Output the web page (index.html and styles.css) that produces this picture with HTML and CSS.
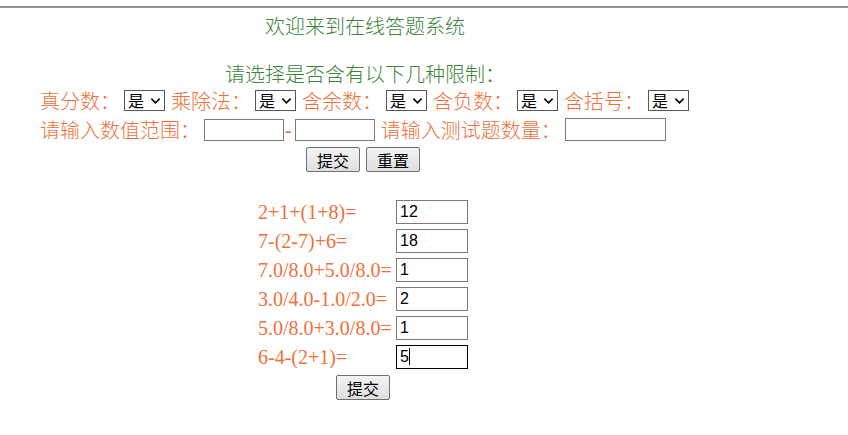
FILE: index.html
```html
<!DOCTYPE html>
<html lang="zh-CN">
<head>
<meta charset="utf-8">
<title>在线答题系统</title>
<link rel="stylesheet" href="styles.css">
</head>
<body>
<div class="topline"></div>
<h1 class="title">欢迎来到在线答题系统</h1>
<p class="prompt">请选择是否含有以下几种限制：</p>
<div class="row row-opts">
  <span class="label">真分数：</span>
  <span class="sel">是<svg viewBox="0 0 12 8" width="11" height="8"><path d="M1.5 1.5 L6 6 L10.5 1.5" fill="none" stroke="#000" stroke-width="1.8"/></svg></span>
  <span class="label">乘除法：</span>
  <span class="sel">是<svg viewBox="0 0 12 8" width="11" height="8"><path d="M1.5 1.5 L6 6 L10.5 1.5" fill="none" stroke="#000" stroke-width="1.8"/></svg></span>
  <span class="label">含余数：</span>
  <span class="sel">是<svg viewBox="0 0 12 8" width="11" height="8"><path d="M1.5 1.5 L6 6 L10.5 1.5" fill="none" stroke="#000" stroke-width="1.8"/></svg></span>
  <span class="label">含负数：</span>
  <span class="sel">是<svg viewBox="0 0 12 8" width="11" height="8"><path d="M1.5 1.5 L6 6 L10.5 1.5" fill="none" stroke="#000" stroke-width="1.8"/></svg></span>
  <span class="label">含括号：</span>
  <span class="sel">是<svg viewBox="0 0 12 8" width="11" height="8"><path d="M1.5 1.5 L6 6 L10.5 1.5" fill="none" stroke="#000" stroke-width="1.8"/></svg></span>
</div>
<div class="row row-range">
  <span class="label">请输入数值范围：</span>
  <input class="box box-range" type="text">
  <span class="dash">-</span>
  <input class="box box-range" type="text">
  <span class="label label-count">请输入测试题数量：</span>
  <input class="box box-count" type="text">
</div>
<div class="row row-btns">
  <button class="btn" type="button">提交</button>
  <button class="btn" type="button">重置</button>
</div>
<div class="questions">
  <div class="q"><span class="expr">2+1+(1+8)=</span><input class="box box-ans" type="text" value="12"></div>
  <div class="q"><span class="expr">7-(2-7)+6=</span><input class="box box-ans" type="text" value="18"></div>
  <div class="q"><span class="expr">7.0/8.0+5.0/8.0=</span><input class="box box-ans" type="text" value="1"></div>
  <div class="q"><span class="expr">3.0/4.0-1.0/2.0=</span><input class="box box-ans" type="text" value="2"></div>
  <div class="q"><span class="expr">5.0/8.0+3.0/8.0=</span><input class="box box-ans" type="text" value="1"></div>
  <div class="q"><span class="expr">6-4-(2+1)=</span><span class="box box-ans focused">5<span class="caret"></span></span></div>
</div>
<div class="row row-submit">
  <button class="btn" type="button">提交</button>
</div>
</body>
</html>
```

FILE: styles.css
```css
html, body {
  margin: 0;
  padding: 0;
  background: #ffffff;
}
body {
  font-family: "Liberation Serif", "Noto Sans CJK SC", serif;
  font-size: 20px;
}
.topline {
  margin-top: 6px;
  height: 2px;
  background: #8f8fa6;
}
.title {
  margin: 6px 0 0 0;
  padding-left: 265px;
  font-size: 20px;
  line-height: 24px;
  height: 24px;
  color: #3a853a;
  font-family: "Noto Sans CJK SC", sans-serif;
  font-weight: 300;
}
.prompt {
  margin: 24px 0 0 0;
  padding-left: 225px;
  line-height: 24px;
  height: 24px;
  color: #3a853a;
  font-family: "Noto Sans CJK SC", sans-serif;
  font-weight: 300;
}
.row {
  display: flex;
  align-items: center;
}
.row-opts {
  height: 29px;
  padding-left: 40px;
}
.row-range {
  height: 29px;
  padding-left: 40px;
}
.label {
  color: #f0703c;
  font-family: "Noto Sans CJK SC", sans-serif;
  font-weight: 300;
  line-height: 24px;
  margin-right: 4px;
}
.sel {
  box-sizing: border-box;
  display: inline-flex;
  align-items: center;
  justify-content: space-between;
  width: 41px;
  height: 21px;
  padding: 0 3px 0 3px;
  margin-right: 6px;
  border: 1px solid #555;
  font-family: "Noto Sans CJK SC", sans-serif;
  font-size: 16px;
  line-height: 19px;
  color: #000;
  background: #fff;
}
.box {
  box-sizing: border-box;
  border: 1px solid #7a7a7a;
  background: #fff;
  font-family: "Liberation Sans", sans-serif;
  font-size: 16px;
  color: #000;
  padding: 0 3px;
  margin: 0;
  outline: none;
}
.box-range {
  width: 80px;
  height: 22px;
}
.dash {
  color: #f0703c;
  margin: 0 3px 0 1px;
  line-height: 24px;
}
.label-count {
  margin-left: 6px;
  margin-right: 4px;
}
.box-count {
  width: 101px;
  height: 23px;
}
.row-btns {
  margin-top: 3px;
  padding-left: 306px;
  gap: 6px;
}
.btn {
  box-sizing: border-box;
  width: 54px;
  height: 25px;
  padding: 0;
  border: 1px solid #707070;
  border-radius: 2px;
  background: linear-gradient(#f4f4f4, #dedede);
  font-family: "Noto Sans CJK SC", sans-serif;
  font-size: 16px;
  line-height: 22px;
  color: #000;
}
.questions {
  margin-top: 25px;
  padding-left: 258px;
}
.q {
  display: flex;
  align-items: center;
  height: 29px;
}
.expr {
  width: 138px;
  color: #f0703c;
  line-height: 24px;
}
.box-ans {
  width: 72px;
  height: 24px;
}
.focused {
  display: inline-flex;
  align-items: center;
  border-color: #000;
  line-height: 22px;
}
.caret {
  display: inline-block;
  width: 1px;
  height: 17px;
  background: #000;
}
.row-submit {
  margin-top: 4px;
  padding-left: 336px;
}
```
